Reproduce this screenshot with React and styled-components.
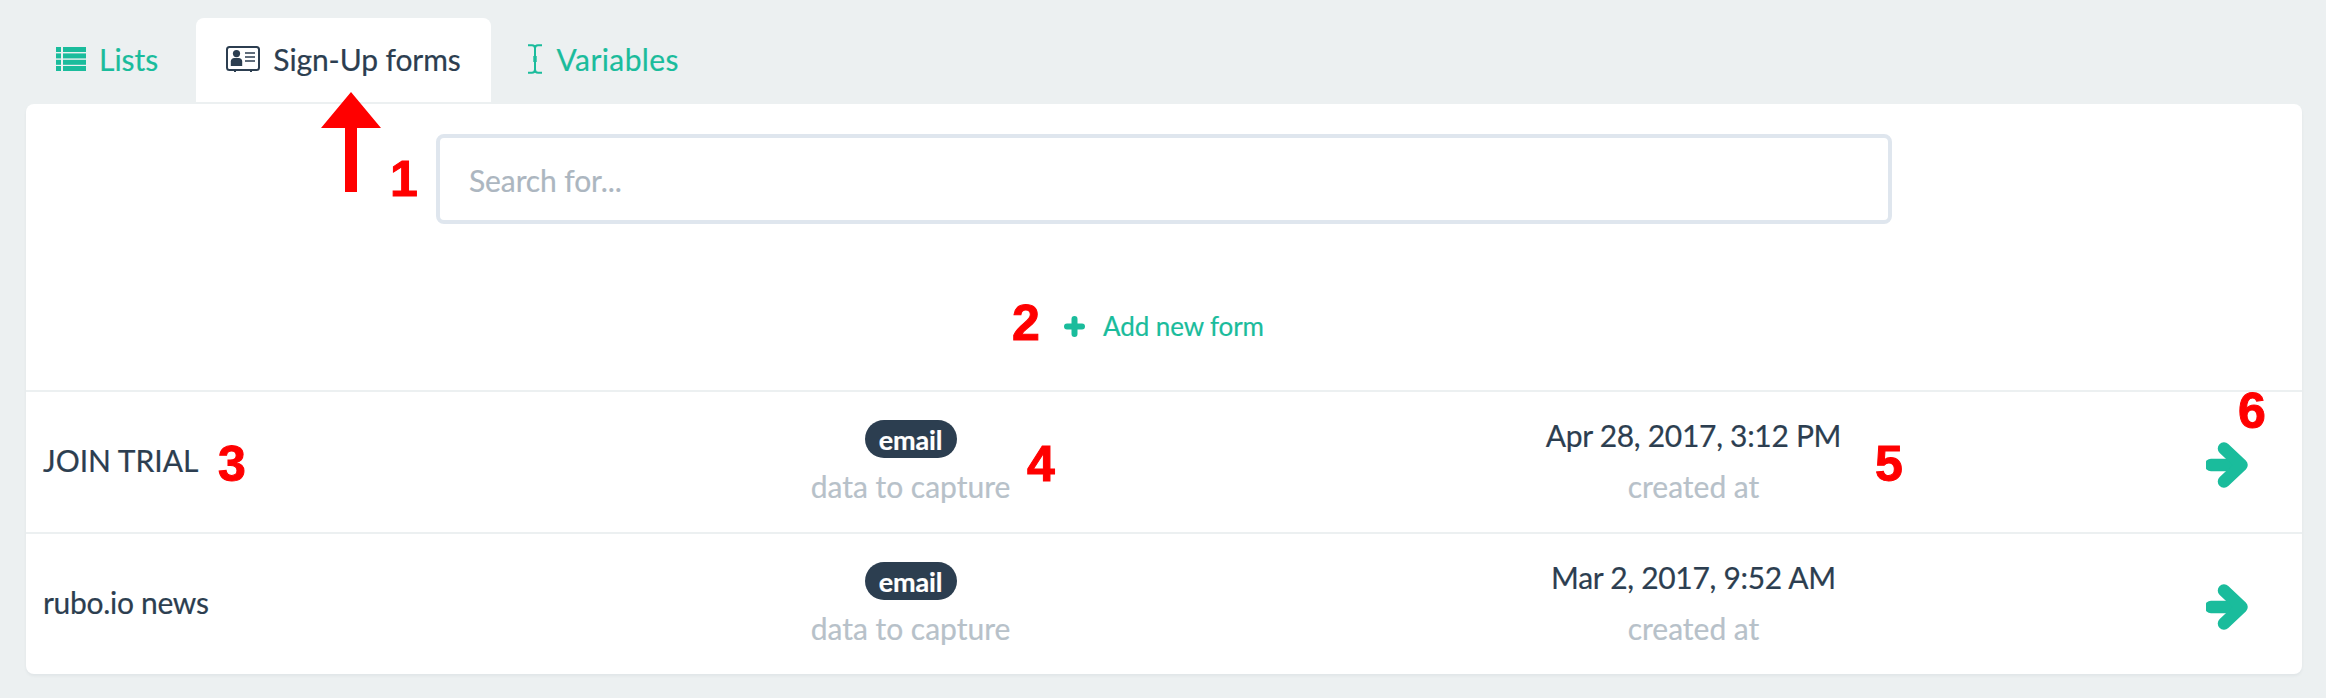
import React from "react";
import styled, { createGlobalStyle } from "styled-components";

const Global = createGlobalStyle`
  html, body { margin: 0; padding: 0; background: #ecf0f1; }
  body { font-family: Lato, "Noto Sans", sans-serif; color: #2c3e50; }
  * { box-sizing: border-box; }
`;

const Page = styled.div`
  position: relative;
  width: 2326px;
  height: 698px;
  padding: 18px 24px 0 26px;
  overflow: hidden;
  -webkit-text-stroke: 0.2px;
`;

const Tabs = styled.nav`
  display: flex;
  height: 84px;
  margin-bottom: 2px;
`;

const Tab = styled.div`
  display: flex;
  align-items: center;
  height: 84px;
  padding: 0 ${(p) => p.$right}px 2px ${(p) => p.$left}px;
  gap: ${(p) => p.$gap}px;
  font-size: 30px;
  letter-spacing: ${(p) => p.$spacing}px;
  border-radius: 8px 8px 0 0;
  color: ${(p) => (p.$active ? "#2c3e50" : "#1abc9c")};
  background: ${(p) => (p.$active ? "#fff" : "transparent")};
`;

const Card = styled.main`
  height: 570px;
  background: #fff;
  border-radius: 8px;
  box-shadow: 0 2px 3px rgba(44, 62, 80, 0.06);
  padding-top: 30px;
`;

const Search = styled.input`
  display: block;
  width: 1456px;
  height: 90px;
  margin: 0 auto;
  padding: 2px 29px 0;
  border: 4px solid #dfe6ee;
  border-radius: 8px;
  outline: none;
  background: #fff;
  font: 400 30px Lato, sans-serif;
  letter-spacing: -0.1px;
  color: #2c3e50;
  -webkit-text-stroke: 0.2px;
  &::placeholder { color: #acb6c0; opacity: 1; }
`;

const AddRow = styled.div`
  display: flex;
  align-items: center;
  justify-content: center;
  gap: 18px;
  height: 166px;
  padding-top: 38px;
  color: #1abc9c;
  font-size: 26px;
  letter-spacing: -0.1px;
`;

const Row = styled.div`
  display: grid;
  grid-template-columns: 476px 783px 783px 1fr;
  height: 142px;
  padding-left: 17px;
  border-top: 2px solid #ecf0f1;
`;

const Name = styled.div`
  align-self: center;
  font-size: 30px;
  letter-spacing: ${(p) => p.$spacing}px;
  margin-top: -4px;
`;

const Cell = styled.div`
  display: flex;
  flex-direction: column;
  align-items: center;
  padding-top: 28px;
`;

const Badge = styled.span`
  display: flex;
  align-items: center;
  justify-content: center;
  width: 92px;
  height: 38px;
  border-radius: 19px;
  background: #2c3e50;
  color: #fff;
  font-size: 27px;
  font-weight: 700;
  letter-spacing: -0.2px;
`;

const DateText = styled.div`
  height: 38px;
  line-height: 38px;
  margin-top: -4px;
  margin-bottom: 4px;
  font-size: 30px;
  letter-spacing: -0.3px;
  white-space: nowrap;
`;

const Caption = styled.div`
  height: 40px;
  line-height: 40px;
  margin-top: 8px;
  font-size: 30px;
  color: #b7c1c9;
`;

const ArrowCell = styled.div`
  display: flex;
  align-items: center;
  justify-content: flex-end;
  padding: 6px 54px 0 0;
`;

const Mark = styled.span`
  position: absolute;
  left: ${(p) => p.$x}px;
  top: ${(p) => p.$y}px;
  color: #ff0000;
  font: 700 50px/50px "Liberation Sans", Arial, sans-serif;
  -webkit-text-stroke: 1px #ff0000;
`;

const Pointer = styled.svg`
  position: absolute;
  left: 321px;
  top: 92px;
`;

const ListIcon = () => (
  <svg width="30" height="24" viewBox="0 0 30 24" fill="#1abc9c">
    <rect x="0" y="0" width="5" height="5" />
    <rect x="7" y="0" width="23" height="5" />
    <rect x="0" y="6.4" width="5" height="5" />
    <rect x="7" y="6.4" width="23" height="5" />
    <rect x="0" y="12.8" width="5" height="5" />
    <rect x="7" y="12.8" width="23" height="5" />
    <rect x="0" y="19" width="5" height="5" />
    <rect x="7" y="19" width="23" height="5" />
  </svg>
);

const IdIcon = () => (
  <svg width="34" height="26" viewBox="0 0 34 26" fill="none">
    <rect x="1" y="1" width="32" height="23" rx="2.5" stroke="#2c3e50" strokeWidth="2" />
    <circle cx="10.5" cy="7.6" r="3.6" fill="#2c3e50" />
    <path d="M4.8 20v-4.4c0-2.4 1.6-3.6 3.4-3.6h4.6c1.8 0 3.4 1.2 3.4 3.6V20z" fill="#2c3e50" />
    <path d="M19 7h10M19 11h10M19 15h10" stroke="#2c3e50" strokeWidth="1.7" />
    <path d="M9 24v2M25 24v2" stroke="#2c3e50" strokeWidth="2" />
  </svg>
);

const CursorIcon = () => (
  <svg width="16" height="30" viewBox="0 0 16 30" fill="none" stroke="#1abc9c" strokeWidth="2">
    <path d="M1 1.2h4c1.8 0 3 1 3 3v8M8 17.500V25.500c0 2-1.400 3.300-3.200 3.300H1" />
    <path d="M15 1.200h-4c-1.800 0-3 1-3 3M15 28.800h-3.800C9.400 28.800 8 27.500 8 25.500" />
    <path d="M8 12v6" strokeWidth="3.400" />
  </svg>
);

const PlusIcon = () => (
  <svg width="21" height="21" viewBox="0 0 21 21" fill="none" stroke="#1abc9c" strokeWidth="6" strokeLinecap="round">
    <path d="M10.500 3v15M3 10.500h15" />
  </svg>
);

const ArrowIcon = () => (
  <svg width="42" height="46" viewBox="0 0 42 46" fill="none" stroke="#1abc9c" strokeWidth="12.500" strokeLinecap="round" strokeLinejoin="round">
    <path d="M5 23h28" />
    <path d="M18 6.500 L35.500 23 L18 39.500" />
  </svg>
);

const forms = [
  { name: "JOIN TRIAL", spacing: 0, date: "Apr 28, 2017, 3:12 PM" },
  { name: "rubo.io news", spacing: -0.3, date: "Mar 2, 2017, 9:52 AM" },
];

const marks = [
  { n: "1", x: 390, y: 154 },
  { n: "2", x: 1012, y: 298 },
  { n: "3", x: 218, y: 439 },
  { n: "4", x: 1027, y: 439 },
  { n: "5", x: 1875, y: 439 },
  { n: "6", x: 2238, y: 386 },
];

export default function App() {
  return (
    <>
      <Global />
      <Page>
        <Tabs>
          <Tab $left={30} $right={38} $gap={13} $spacing={0}><ListIcon />Lists</Tab>
          <Tab $active $left={30} $right={30} $gap={13} $spacing={-0.1}><IdIcon />Sign-Up forms</Tab>
          <Tab $left={36} $right={31} $gap={14} $spacing={0.4}><CursorIcon />Variables</Tab>
        </Tabs>
        <Card>
          <Search placeholder="Search for..." />
          <AddRow><PlusIcon />Add new form</AddRow>
          {forms.map((f) => (
            <Row key={f.name}>
              <Name $spacing={f.spacing}>{f.name}</Name>
              <Cell>
                <Badge>email</Badge>
                <Caption>data to capture</Caption>
              </Cell>
              <Cell>
                <DateText>{f.date}</DateText>
                <Caption>created at</Caption>
              </Cell>
              <ArrowCell><ArrowIcon /></ArrowCell>
            </Row>
          ))}
        </Card>
        <Pointer width="60" height="100" viewBox="0 0 60 100">
          <path d="M30 0 L60 36 H36 V100 H24 V36 H0 Z" fill="#ff0000" />
        </Pointer>
        {marks.map((m) => (
          <Mark key={m.n} $x={m.x} $y={m.y}>{m.n}</Mark>
        ))}
      </Page>
    </>
  );
}
